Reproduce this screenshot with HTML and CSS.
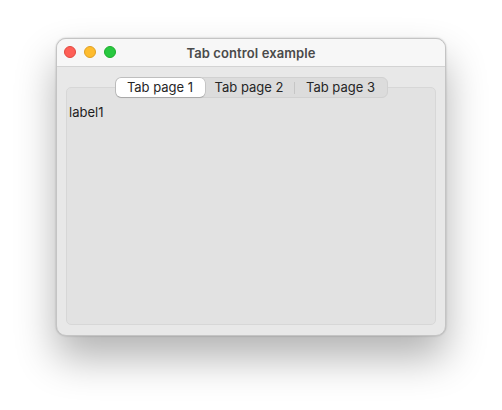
FILE: index.html
```html
<!DOCTYPE html>
<html>
<head>
<meta charset="utf-8">
<link rel="stylesheet" href="styles.css">
</head>
<body>
<div class="window">
  <div class="titlebar">
    <div class="lights">
      <span class="light red"></span>
      <span class="light yellow"></span>
      <span class="light green"></span>
    </div>
    <div class="title">Tab control example</div>
  </div>
  <div class="content">
    <div class="tabs">
      <div class="tab active">Tab page 1</div>
      <div class="tab">Tab page 2</div>
      <div class="sep"></div>
      <div class="tab last">Tab page 3</div>
    </div>
    <div class="pane">
      <div class="label">label1</div>
    </div>
  </div>
</div>
</body>
</html>
```
FILE: styles.css
```css
html, body {
  margin: 0;
  background: #ffffff;
}
body {
  min-height: 100vh;
  box-sizing: border-box;
  padding: 38px 0 0 56px;
  font-family: Inter, "Liberation Sans", sans-serif;
  font-size: 13px;
  color: #1e1e1e;
}
.window {
  width: 390px;
  height: 298px;
  box-sizing: border-box;
  border-radius: 10px;
  background: #e8e8e8;
  border: 1px solid #c4c4c4;
  box-shadow: 0 22px 40px rgba(0,0,0,0.30), 0 0 2px rgba(0,0,0,0.25);
  overflow: hidden;
  display: flex;
  flex-direction: column;
}
.titlebar {
  height: 27px;
  flex: none;
  background: #f7f7f7;
  border-bottom: 1px solid #d3d3d3;
  position: relative;
  display: flex;
  align-items: center;
  justify-content: center;
}
.lights {
  position: absolute;
  left: 7px;
  top: 7px;
  display: flex;
  gap: 8px;
}
.light {
  width: 12px;
  height: 12px;
  border-radius: 50%;
  box-sizing: border-box;
}
.red { background: #fe5f57; border: 0.5px solid #e1483f; }
.yellow { background: #febc2e; border: 0.5px solid #dfa023; }
.green { background: #28c840; border: 0.5px solid #1dad2b; }
.title {
  font-weight: 600;
  font-size: 13px;
  color: #4a4a4a;
  letter-spacing: 0.1px;
}
.content {
  flex: 1;
  padding: 10px 9px 10px 9px;
  display: flex;
  flex-direction: column;
  align-items: center;
}
.tabs {
  position: relative;
  z-index: 1;
  display: flex;
  align-items: center;
  height: 21px;
  box-sizing: border-box;
  background: #dcdcdc;
  border: 1px solid #d1d1d1;
  border-radius: 6px;
  margin-bottom: -11px;
}
.tab {
  height: 19px;
  line-height: 19px;
  padding: 0;
  box-sizing: border-box;
  color: #262626;
  width: 89px;
  text-align: center;
  white-space: nowrap;
}
.tab.last { width: 92px; }
.tab.active {
  background: #ffffff;
  border-radius: 5px;
  box-shadow: 0 0 0 0.5px rgba(0,0,0,0.18), 0 1px 1px rgba(0,0,0,0.12);
}
.sep {
  width: 1px;
  height: 12px;
  background: #c6c6c6;
}
.pane {
  align-self: stretch;
  flex: 1;
  background: #e2e2e2;
  border: 1px solid #d7d7d7;
  border-radius: 5px;
  padding: 16px 2px 0 2px;
}
.label {
  color: #1e1e1e;
}
```
